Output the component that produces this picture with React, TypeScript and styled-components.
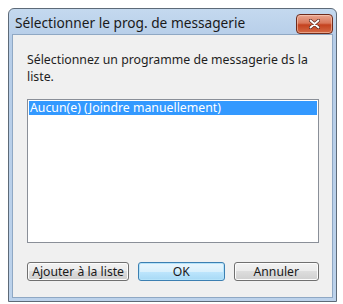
import React from "react";
import styled, { createGlobalStyle } from "styled-components";

const Global = createGlobalStyle`
  html, body { margin: 0; padding: 0; background: #ffffff; }
  body { font-family: "Noto Sans", "Open Sans", Arial, sans-serif; }
`;

const Page = styled.div`
  padding: 8px 0 0 8px;
  width: 343px;
  height: 304px;
  box-sizing: border-box;
`;

const Window = styled.div`
  width: 329px;
  height: 294px;
  box-sizing: border-box;
  border: 1px solid #5d6a78;
  border-radius: 6px 6px 0 0;
  background: linear-gradient(#c4d9ef, #b6cde8 30px, #bcd2eb);
  display: flex;
  flex-direction: column;
  padding: 0 3px 3px 3px;
`;

const TitleBar = styled.div`
  height: 25px;
  display: flex;
  align-items: center;
  justify-content: space-between;
  padding-left: 3px;
`;

const Title = styled.span`
  font-size: 13.7px;
  color: #1a1a1a;
  margin-top: 2px;
`;

const CloseButton = styled.div`
  width: 37px;
  height: 20px;
  margin-top: 4px;
  box-sizing: border-box;
  border: 1px solid #6e2b1c;
  border-radius: 4px;
  background: linear-gradient(#e9a590, #d9775a 45%, #c4421f 55%, #d46a45);
  display: flex;
  align-items: center;
  justify-content: center;
  box-shadow: inset 0 0 0 1px rgba(255, 220, 200, 0.5);
`;

const Content = styled.div`
  flex: 1;
  background: #f0f0f0;
  border: 1px solid #8fa8c4;
  display: flex;
  flex-direction: column;
  padding: 16px 13px 0 14px;
`;

const Prompt = styled.p`
  margin: 0;
  font-size: 12.3px;
  line-height: 17px;
  color: #1e1e1e;
`;

const ListBox = styled.div`
  margin-top: 14px;
  height: 144px;
  box-sizing: border-box;
  border: 1px solid #8a8f98;
  background: #ffffff;
  padding: 1px;
`;

const ListItem = styled.div<{ $selected?: boolean }>`
  height: 14px;
  line-height: 14px;
  font-size: 12.3px;
  padding-left: 1px;
  color: ${(p) => (p.$selected ? "#ffffff" : "#000000")};
  background: ${(p) => (p.$selected ? "#3399ff" : "transparent")};
`;

const ButtonRow = styled.div`
  display: flex;
  gap: 9px;
  margin-top: 19px;
`;

const Button = styled.div<{ $default?: boolean; $w: number }>`
  width: ${(p) => p.$w}px;
  height: 19px;
  box-sizing: border-box;
  border: 1px solid ${(p) => (p.$default ? "#3c7fb1" : "#707070")};
  border-radius: 3px;
  background: ${(p) =>
    p.$default
      ? "linear-gradient(#eaf6fd, #d9f0fc 50%, #bee6fd 50%, #a7d9f5)"
      : "linear-gradient(#f2f2f2, #ebebeb 50%, #dddddd 50%, #cfcfcf)"};
  box-shadow: inset 0 0 0 1px ${(p) => (p.$default ? "#b5e3fa" : "#fcfcfc")};
  display: flex;
  align-items: center;
  justify-content: center;
  font-size: 12.2px;
  color: #1a1a1a;
  white-space: nowrap;
`;

const XIcon = () => (
  <svg width="11" height="10" viewBox="0 0 11 10">
    <path d="M1.5 1.5 L9.5 8.5 M9.5 1.5 L1.5 8.5" stroke="#5a2a20" strokeWidth="3.2" strokeLinecap="round" />
    <path d="M1.5 1.5 L9.5 8.5 M9.5 1.5 L1.5 8.5" stroke="#ffffff" strokeWidth="1.8" strokeLinecap="round" />
  </svg>
);

export default function App() {
  return (
    <>
      <Global />
      <Page>
        <Window>
          <TitleBar>
            <Title>Sélectionner le prog. de messagerie</Title>
            <CloseButton>
              <XIcon />
            </CloseButton>
          </TitleBar>
          <Content>
            <Prompt>
              Sélectionnez un programme de messagerie ds la
              <br />
              liste.
            </Prompt>
            <ListBox>
              <ListItem $selected>Aucun(e) (Joindre manuellement)</ListItem>
            </ListBox>
            <ButtonRow>
              <Button $w={104}>Ajouter à la liste</Button>
              <Button $w={88} $default>
                OK
              </Button>
              <Button $w={87}>Annuler</Button>
            </ButtonRow>
          </Content>
        </Window>
      </Page>
    </>
  );
}
